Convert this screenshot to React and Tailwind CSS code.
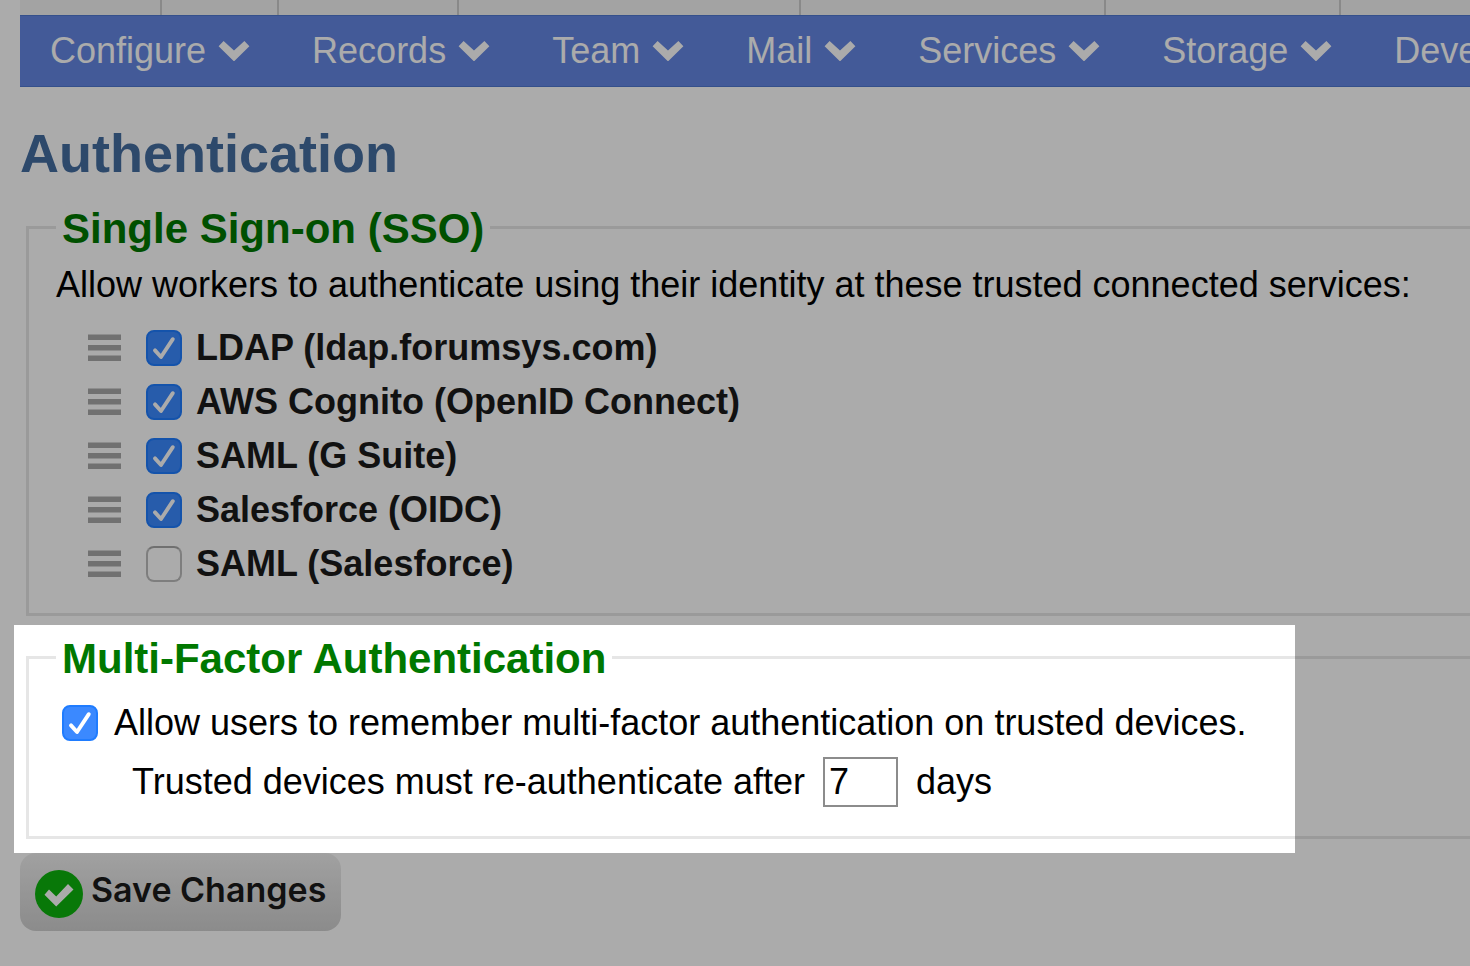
import React from "react";

const tabs = [
  { id: "a", width: "w-[142px]" },
  { id: "b", width: "w-[117px]" },
  { id: "c", width: "w-[180px]" },
  { id: "d", width: "w-[342px]" },
  { id: "e", width: "w-[305px]" },
  { id: "f", width: "w-[235px]" },
];

const menus = ["Configure", "Records", "Team", "Mail", "Services", "Storage", "Developers"];

const services = [
  { id: "ldap", name: "LDAP (ldap.forumsys.com)", on: true },
  { id: "cognito", name: "AWS Cognito (OpenID Connect)", on: true },
  { id: "gsuite", name: "SAML (G Suite)", on: true },
  { id: "sf-oidc", name: "Salesforce (OIDC)", on: true },
  { id: "sf-saml", name: "SAML (Salesforce)", on: false },
];

function Chevron() {
  return (
    <svg className="h-5 w-8 shrink-0" viewBox="0 0 32 20" fill="currentColor" aria-hidden="true">
      <path d="M5.6 0 16 9.4 26.4 0 31.4 5.2 16 20.4 0.6 5.2Z" />
    </svg>
  );
}

function Grip() {
  return (
    <svg className="h-7 w-[33px] shrink-0" viewBox="0 0 33 28" fill="#a9a9a9" aria-hidden="true">
      <path d="M0 .5h33v5.5H0zM0 11h33v5.5H0zM0 21.5h33V27H0z" />
    </svg>
  );
}

function Checkbox({ id, defaultChecked }) {
  return (
    <span className="grid size-9 shrink-0">
      <input
        id={id}
        type="checkbox"
        defaultChecked={defaultChecked}
        className="peer col-start-1 row-start-1 size-9 appearance-none rounded-lg border-2 border-[#bdbdbd] border-t-[#a8a8a8] bg-white checked:border-[#1f7cff] checked:bg-[#3b89ff]"
      />
      <svg
        className="pointer-events-none invisible col-start-1 row-start-1 size-9 peer-checked:visible"
        viewBox="0 0 36 36"
        fill="none"
        stroke="white"
        strokeWidth="3.9"
        strokeLinecap="round"
        strokeLinejoin="round"
        aria-hidden="true"
      >
        <path d="M9 20.4 15 27 26.8 9.2" />
      </svg>
    </span>
  );
}

function Group({ title, children }) {
  return (
    <fieldset className="-mr-3 ml-[6px] min-w-0 border-[3px] border-[#e6e6e6] px-[27px]">
      <legend className="px-[6px] pt-1 text-[42px] leading-[44px] font-bold whitespace-nowrap text-[#007800]">
        {title}
      </legend>
      {children}
    </fieldset>
  );
}

export default function App() {
  return (
    <div className="min-h-screen overflow-hidden bg-white pb-8 pl-5 font-['Liberation_Sans',Arial,sans-serif] text-4xl text-black">
      <div className="flex h-[15px] overflow-hidden bg-[#f3f3f3]" aria-hidden="true">
        {tabs.map((t) => (
          <div key={t.id} className={`${t.width} shrink-0 border-r-2 border-[#cccccc]`} />
        ))}
      </div>

      <nav className="flex h-[72px] gap-[62px] overflow-hidden border-y border-[#5078d0] bg-[#6486e3] pl-[30px] text-white">
        {menus.map((m) => (
          <button key={m} type="button" className="flex shrink-0 items-center gap-3">
            {m}
            <Chevron />
          </button>
        ))}
      </nav>

      <h1 className="mt-[34px] mb-[18px] text-[54px] leading-[64px] font-bold text-[#446da0]">Authentication</h1>

      <Group title="Single Sign-on (SSO)">
        <p className="pt-3 pb-[14px] leading-[44px] whitespace-nowrap">
          Allow workers to authenticate using their identity at these trusted connected services:
        </p>
        <ul className="pb-[22px] pl-8">
          {services.map((s) => (
            <li key={s.id} className="flex h-[54px] items-center">
              <Grip />
              <label htmlFor={s.id} className="ml-[25px] flex items-center gap-[14px] font-bold whitespace-nowrap text-[#1a1a1a]">
                <Checkbox id={s.id} defaultChecked={s.on} />
                {s.name}
              </label>
            </li>
          ))}
        </ul>
      </Group>

      <div className="relative mt-[17px]">
        <Group title="Multi-Factor Authentication">
          <div className="px-[6px] pt-5 pb-[29px]">
            <label htmlFor="remember" className="flex items-center gap-4 leading-[44px] whitespace-nowrap">
              <Checkbox id="remember" defaultChecked />
              Allow users to remember multi-factor authentication on trusted devices.
            </label>
            <div className="mt-3 flex items-center gap-[18px] pl-[70px] whitespace-nowrap">
              <label htmlFor="days">Trusted devices must re-authenticate after</label>
              <input
                id="days"
                type="text"
                defaultValue="7"
                className="h-[50px] w-[75px] border-2 border-[#8c8c8c] bg-white px-1"
              />
              <span>days</span>
            </div>
          </div>
        </Group>
        <div className="pointer-events-none absolute -top-2 right-[175px] -bottom-[14px] -left-[6px] z-10 shadow-[0_0_0_3000px_rgba(0,0,0,0.33)]" />
      </div>

      <button
        type="button"
        className="mt-[14px] flex h-[78px] items-center gap-2 rounded-2xl bg-linear-to-b from-[#f0f0f0] to-[#d0d0d0] px-[15px] font-['Inter',sans-serif] text-[34px] font-semibold text-[#1a1a1a]"
      >
        <svg className="mt-1 size-12 shrink-0" viewBox="0 0 48 48" aria-hidden="true">
          <circle cx="24" cy="24" r="24" fill="#0cb40c" />
          <path d="M14 19.5 21.2 26.4 33 14 38.5 19.5 21.2 36.5 9.5 24.8Z" fill="white" />
        </svg>
        <span className="pb-1">Save Changes</span>
      </button>
    </div>
  );
}
